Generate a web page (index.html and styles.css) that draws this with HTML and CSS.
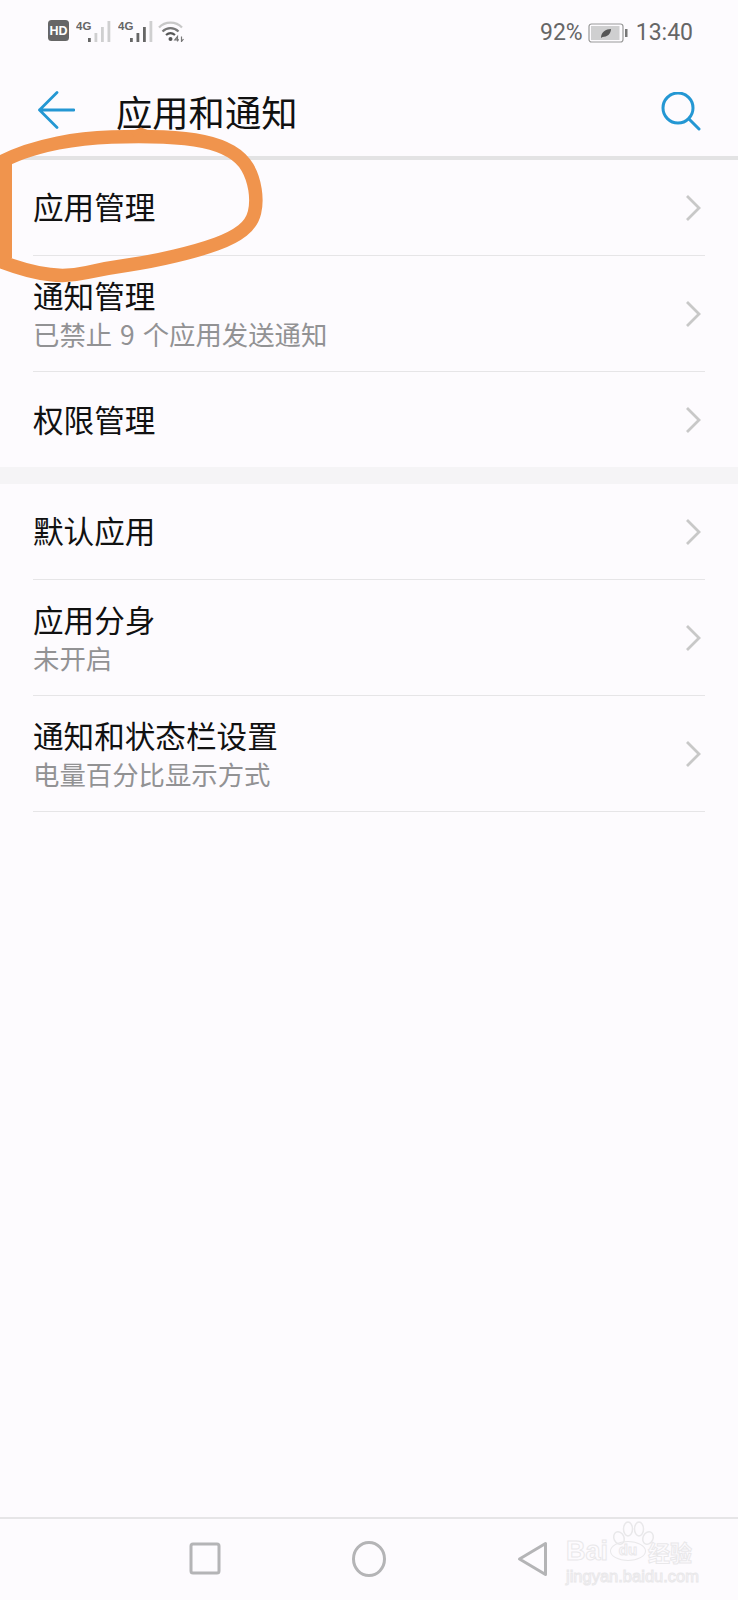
FILE: index.html
```html
<!DOCTYPE html>
<html lang="zh-CN">
<head>
<meta charset="utf-8">
<title>应用和通知</title>
<link rel="stylesheet" href="styles.css">
</head>
<body>
<div class="screen">
  <div class="status">
    <div class="status-left">
      <svg width="22" height="21" viewBox="0 0 22 21"><rect width="21" height="21" rx="3.500" fill="#666"/><text x="10.500" y="15" text-anchor="middle" class="hd-text">HD</text></svg>
      <svg width="36" height="22" viewBox="0 0 36 22">
        <text x="0" y="9.500" class="net-text">4G</text>
        <rect x="12" y="18" width="2.800" height="4" fill="#666"/><rect x="18.500" y="13" width="2.800" height="9" fill="#cfcfd0"/><rect x="25" y="7" width="2.800" height="15" fill="#cfcfd0"/><rect x="31.500" y="1" width="2.800" height="21" fill="#cfcfd0"/>
      </svg>
      <svg width="36" height="22" viewBox="0 0 36 22">
        <text x="0" y="9.500" class="net-text">4G</text>
        <rect x="12" y="18" width="2.800" height="4" fill="#666"/><rect x="18.500" y="13" width="2.800" height="9" fill="#666"/><rect x="25" y="7" width="2.800" height="15" fill="#666"/><rect x="31.500" y="1" width="2.800" height="21" fill="#cfcfd0"/>
      </svg>
      <svg class="icon-wifi" width="26" height="22" viewBox="0 0 26 22" fill="none">
        <path d="M1 7.500C7 1 18 1 24 7.500" stroke="#c8c8c8" stroke-width="2.200"/>
        <path d="M4.500 11.500C9 7 16 7 20.500 11.500" stroke="#777" stroke-width="2.200"/>
        <path d="M8 15C11 12.500 14 12.500 17 15" stroke="#555" stroke-width="2.200"/>
        <circle cx="12.500" cy="19" r="2" fill="#555"/>
        <path d="M19.500 21.500V16.500L16.800 19.800H21M23.500 16.500V21.500L25.500 19" stroke="#777" stroke-width="1.200"/>
      </svg>
    </div>
    <div class="status-right">
      <span class="pct">92%</span>
      <svg width="40" height="20" viewBox="0 0 40 20" fill="none">
        <rect x="1" y="1" width="34" height="18" rx="2.500" fill="#fdfbfe" stroke="#9a9a9a" stroke-width="1.200"/>
        <rect x="3" y="3" width="28.500" height="14" fill="#cfcfd0"/>
        <rect x="37" y="6" width="2.500" height="8" fill="#777"/>
        <path d="M13 15C13 9 18 6 23 6C23 11 19 14 14.500 14Z" fill="#555"/>
      </svg>
      <span>13:40</span>
    </div>
  </div>

  <header class="appbar">
    <svg class="icon-back" width="38" height="38" viewBox="0 0 38 38" fill="none"><path d="M20 1.500 2.500 19 20 36.500M2.500 19H37" stroke="#2497d3" stroke-width="2.800" stroke-linecap="round" stroke-linejoin="round"/></svg>
    <h1 class="title">应用和通知</h1>
    <svg class="icon-search" width="40" height="40" viewBox="0 0 40 40" fill="none"><circle cx="17" cy="16" r="15" stroke="#2497d3" stroke-width="3"/><path d="M28 27 38 37" stroke="#2497d3" stroke-width="3" stroke-linecap="round"/></svg>
  </header>

  <main>
    <section class="group">
      <div class="row row-single"><div class="row-title">应用管理</div><svg class="chevron" width="16" height="28" viewBox="0 0 16 28" fill="none"><path d="M2 2 14 14 2 26" stroke="#c8c8c8" stroke-width="2.800"/></svg></div>
      <div class="row row-double"><div class="row-text"><div class="row-title">通知管理</div><div class="row-sub">已禁止 9 个应用发送通知</div></div><svg class="chevron" width="16" height="28" viewBox="0 0 16 28" fill="none"><path d="M2 2 14 14 2 26" stroke="#c8c8c8" stroke-width="2.800"/></svg></div>
      <div class="row row-single row-last"><div class="row-title">权限管理</div><svg class="chevron" width="16" height="28" viewBox="0 0 16 28" fill="none"><path d="M2 2 14 14 2 26" stroke="#c8c8c8" stroke-width="2.800"/></svg></div>
    </section>
    <div class="group-gap"></div>
    <section class="group">
      <div class="row row-single"><div class="row-title">默认应用</div><svg class="chevron" width="16" height="28" viewBox="0 0 16 28" fill="none"><path d="M2 2 14 14 2 26" stroke="#c8c8c8" stroke-width="2.800"/></svg></div>
      <div class="row row-double"><div class="row-text"><div class="row-title">应用分身</div><div class="row-sub">未开启</div></div><svg class="chevron" width="16" height="28" viewBox="0 0 16 28" fill="none"><path d="M2 2 14 14 2 26" stroke="#c8c8c8" stroke-width="2.800"/></svg></div>
      <div class="row row-double"><div class="row-text"><div class="row-title">通知和状态栏设置</div><div class="row-sub">电量百分比显示方式</div></div><svg class="chevron" width="16" height="28" viewBox="0 0 16 28" fill="none"><path d="M2 2 14 14 2 26" stroke="#c8c8c8" stroke-width="2.800"/></svg></div>
    </section>
  </main>

  <nav class="navbar">
    <svg class="nav-icon" width="32" height="33" viewBox="0 0 32 33" fill="none"><rect x="2" y="2" width="28" height="29" rx="2" stroke="#b4b4b6" stroke-width="3"/></svg>
    <svg class="nav-icon nav-gap" width="34" height="36" viewBox="0 0 34 36" fill="none"><ellipse cx="17" cy="18" rx="15.500" ry="16.500" stroke="#b4b4b6" stroke-width="3"/></svg>
    <svg class="nav-icon nav-gap" width="31" height="36" viewBox="0 0 31 36" fill="none"><path d="M28.500 2.500V33.500L2.500 18Z" stroke="#b4b4b6" stroke-width="3" stroke-linejoin="round"/></svg>
  </nav>

  <svg class="scribble" width="280" height="170" viewBox="0 120 280 170" fill="none">
    <path d="M-8 168Q14 152 58 143Q83 138 111.500 137Q140 136 163.500 137Q187 138 203.500 141.500Q220 145 231 151.500Q242 158 247.500 167.500Q253 177 255 189.500Q257 202 254.500 212.500Q252 223 242.500 230.500Q233 238 216.500 244Q200 250 175 256Q150 262 128.500 265Q107 268 87 272.500Q67 277 50 274.500Q26 272 -8 258" stroke="#f0944d" stroke-width="13.500" stroke-linejoin="round"/>
    <path d="M5 160V258" stroke="#f0944d" stroke-width="14"/>
    <path d="M132 134 141 130 151 134" stroke="#f0944d" stroke-width="5" stroke-linejoin="round"/>
  </svg>

  <div class="watermark">
    <svg class="wm-paw" width="44" height="26" viewBox="0 0 44 26" fill="none" stroke="#e9e8ea" stroke-width="1.500">
      <ellipse cx="8" cy="18" rx="5" ry="6.500" transform="rotate(-25 8 18)"/>
      <ellipse cx="17" cy="9" rx="4.500" ry="7"/>
      <ellipse cx="28" cy="9" rx="4.500" ry="7"/>
      <ellipse cx="37" cy="18" rx="5" ry="6.500" transform="rotate(25 37 18)"/>
    </svg>
    <div class="wm-top">
      <span class="wm-bai">Bai</span>
      <span class="wm-du">du</span>
      <span class="wm-cn">经验</span>
    </div>
    <div class="wm-url">jingyan.baidu.com</div>
  </div>
</div>
</body>
</html>
```
FILE: styles.css
```css
* { box-sizing: border-box; }
html, body { margin: 0; padding: 0; }
body {
  width: 738px;
  height: 1600px;
  overflow: hidden;
  background: #fdfbfe;
  font-family: "Noto Sans CJK SC", "Noto Sans", sans-serif;
}
.screen {
  position: relative;
  width: 738px;
  height: 1600px;
  display: flex;
  flex-direction: column;
  overflow: hidden;
}
.status {
  height: 60px;
  display: flex;
  align-items: flex-start;
  justify-content: space-between;
  padding: 20px 45px 0 48px;
  color: #666;
  font-family: Roboto, sans-serif;
  font-size: 23px;
  line-height: 23px;
}
.status-left { display: flex; gap: 6px; align-items: flex-start; }
.status-right { display: flex; gap: 8px; align-items: center; margin-top: 1px; }
.pct { margin-right: -3px; }
.hd-text { font: 700 12.500px "Liberation Sans", sans-serif; fill: #fff; }
.net-text { font: 700 11.500px "Liberation Sans Narrow", "Liberation Sans", sans-serif; fill: #666; }
.icon-wifi { margin-left: -2px; }
.appbar {
  height: 96px;
  display: flex;
  align-items: center;
  padding: 0 38px 0 37px;
}
.icon-back { flex: none; margin-top: 4px; }
.title {
  flex: 1;
  margin: 5px 0 0 41px;
  font-size: 36.300px;
  font-weight: 400;
  line-height: 48px;
  color: #111;
}
.icon-search { flex: none; margin-top: 8px; margin-right: -1px; }
main {
  flex: 1;
  border-top: 4px solid #e3e3e4;
}
.group { padding: 0 33px; }
.row {
  display: flex;
  align-items: center;
  justify-content: space-between;
  border-bottom: 1px solid #e6e5e7;
}
.row-single { height: 96px; }
.row-double { height: 116px; }
.row-last { border-bottom: none; height: 95px; }
.row-title {
  font-size: 30.600px;
  line-height: 38px;
  color: #111;
}
.row-single .row-title { margin-top: -3px; }
.row-last .row-title { margin-top: -2px; }
.row-text { padding-top: 2px; }
.row-sub {
  font-size: 26.400px;
  line-height: 36px;
  margin-top: 2px;
  word-spacing: 2px;
  color: #929294;
}
.row-double .row-title { margin-top: -1px; }
.chevron { flex: none; margin-right: 4px; }
.group-gap { height: 17px; background: #f5f4f6; }
.navbar {
  height: 83px;
  border-top: 2px solid #e6e5e7;
  display: flex;
  align-items: center;
  padding: 0 0 0 189px;
}
.nav-gap { margin-left: 131px; }
.nav-icon { flex: none; margin-top: -2px; }
.scribble {
  position: absolute;
  left: 0;
  top: 120px;
  overflow: visible;
}
.watermark {
  position: absolute;
  left: 566px;
  top: 1538px;
  width: 136px;
  color: transparent;
  -webkit-text-stroke: 1px #e9e8ea;
  pointer-events: none;
}
.wm-paw {
  position: absolute;
  left: 45px;
  top: -18px;
}
.wm-top {
  display: flex;
  align-items: center;
  height: 26px;
  font-family: "Liberation Sans", sans-serif;
}
.wm-bai { font-size: 27px; font-weight: 700; line-height: 26px; }
.wm-du {
  width: 36px;
  height: 20px;
  margin-left: 2px;
  border: 1.500px solid #e9e8ea;
  border-radius: 50%;
  font-size: 15px;
  font-weight: 700;
  line-height: 16px;
  text-align: center;
}
.wm-cn { font: 700 22px/26px "Noto Sans CJK SC", sans-serif; margin-left: 2px; }
.wm-url {
  font: 400 16.500px/18px "Liberation Sans", sans-serif;
  white-space: nowrap;
  margin-top: 3px;
}
```
